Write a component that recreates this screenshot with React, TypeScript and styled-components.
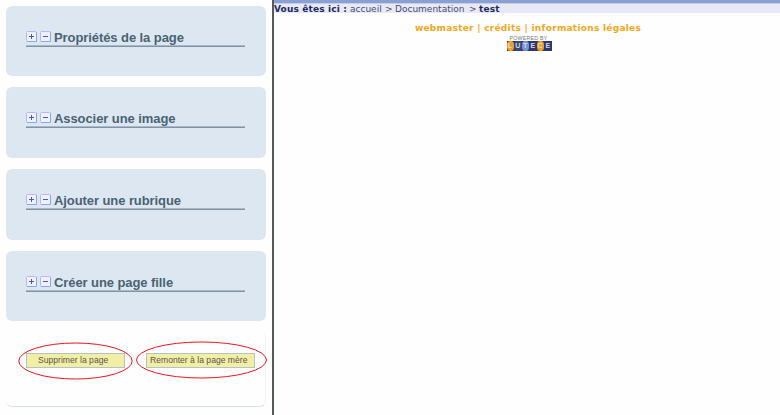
import React from "react";
import styled, { createGlobalStyle } from "styled-components";

const GlobalStyle = createGlobalStyle`
  * { box-sizing: border-box; }
  body { margin: 0; background: #fefefe; overflow: hidden; }
`;

const Page = styled.div`
  display: flex;
  width: 780px;
  height: 415px;
  overflow: hidden;
  background: #fefefe;
`;

const Sidebar = styled.aside`
  display: flex;
  flex-direction: column;
  gap: 11px;
  width: 272px;
  padding: 6px 6px 0;
  font-family: "Liberation Sans", Arial, sans-serif;
`;

const Card = styled.section<{ $height: number }>`
  flex: none;
  width: 260px;
  height: ${(p) => p.$height}px;
  padding: 22px 20px 0;
  border-radius: 6px;
  background: #dde7f1;
`;

const CardHeading = styled.div`
  display: flex;
  align-items: flex-start;
  width: 219px;
  height: 19px;
  padding-top: 3px;
  border-bottom: 1px solid #7e93a6;
  box-shadow: 0 -1px 0 #a9b9c7 inset;
`;

const ToggleIcon = styled.svg`
  flex: none;
  width: 11px;
  height: 11px;
  margin-right: 3px;
`;

const Title = styled.h2`
  margin: 0;
  font-size: 13px;
  line-height: 14px;
  font-weight: bold;
  letter-spacing: -0.08px;
  white-space: nowrap;
  color: #4a6274;
`;

const ActionCard = styled.section`
  display: flex;
  flex: none;
  justify-content: space-between;
  align-items: flex-start;
  width: 260px;
  height: 75px;
  padding: 21px 10px 0 20px;
  border-radius: 6px;
  border-bottom: 1px solid #dbe3e8;
  border-right: 1px solid #f0f3f6;
`;

const ActionWrap = styled.div<{ $width: number }>`
  position: relative;
  width: ${(p) => p.$width}px;
  height: 15px;
`;

const ActionButton = styled.button<{ $indent: number }>`
  display: block;
  width: 100%;
  height: 15px;
  padding: 0 0 0 ${(p) => p.$indent}px;
  border: 1px solid #b3c5c0;
  background: #f3eea6;
  color: #55584a;
  font: 8.6px/13px "Liberation Sans", Arial, sans-serif;
  text-align: left;
  white-space: nowrap;
`;

const Highlight = styled.svg<{ $left: number; $top: number }>`
  position: absolute;
  left: ${(p) => p.$left}px;
  top: ${(p) => p.$top}px;
  pointer-events: none;
`;

const Divider = styled.div`
  width: 2px;
  background: #555b5b;
`;

const Main = styled.main`
  flex: 1;
  min-width: 0;
  font-family: "DejaVu Sans", Verdana, sans-serif;
`;

const TopBar = styled.div`
  height: 4px;
  background: #8ba0d2;
  border-bottom: 1px solid #c3cee7;
`;

const Breadcrumb = styled.nav`
  display: flex;
  height: 9px;
  background: #e7e9f5;
  font-size: 9px;
  line-height: 10px;
  white-space: pre;
`;

const Crumb = styled.span<{ $width: number; $bold?: boolean }>`
  width: ${(p) => p.$width}px;
  font-weight: ${(p) => (p.$bold ? "bold" : "normal")};
  color: ${(p) => (p.$bold ? "#23285f" : "#474c7a")};
  letter-spacing: ${(p) => (p.$bold ? 0.15 : 0)}px;
`;

const Footer = styled.footer`
  display: flex;
  flex-direction: column;
  align-items: center;
  padding: 9px 0 0 2px;
`;

const FooterLinks = styled.div`
  height: 13px;
  color: #f5a71c;
  font-size: 9px;
  line-height: 13px;
  font-weight: bold;
  letter-spacing: 0.27px;
  white-space: nowrap;
`;

const Powered = styled.div`
  height: 6px;
  margin-left: 1px;
  color: #777;
  font: 5.2px/6px "Liberation Sans", Arial, sans-serif;
  letter-spacing: 0.3px;
`;

const Logo = styled.div`
  display: flex;
  width: 45px;
  height: 10px;
  margin-left: 2px;
  background: #2c386f;
`;

const LogoLetter = styled.span<{ $fill: string }>`
  flex: 1 0 0;
  min-width: 0;
  height: 10px;
  border-radius: 40%;
  background: ${(p) => p.$fill};
  color: #d6dae6;
  font: bold 7px/10px "Liberation Sans", Arial, sans-serif;
  text-align: center;
`;

function Toggle({ plus }: { plus?: boolean }) {
  return (
    <ToggleIcon viewBox="0 0 11 11">
      <rect x="0.5" y="0.5" width="10" height="10" rx="1" fill="#eef0ff" stroke="#b9b8f6" />
      <path d="M1 10.5H10.5V1" fill="none" stroke="#83a9f5" />
      <path d={plus ? "M3 5.5H8M5.5 3V8" : "M3 5.5H8"} stroke="#5457a2" fill="none" />
    </ToggleIcon>
  );
}

const sections = [
  { title: "Propriétés de la page", height: 70 },
  { title: "Associer une image", height: 71 },
  { title: "Ajouter une rubrique", height: 71 },
  { title: "Créer une page fille", height: 70 },
];

const letters = [
  { letter: "L", fill: "#f0a01c" },
  { letter: "U", fill: "#3c4878" },
  { letter: "T", fill: "#7895d2" },
  { letter: "E", fill: "#2c386f" },
  { letter: "C", fill: "#f0a01c" },
  { letter: "E", fill: "#2c386f" },
];

export default function App() {
  return (
    <>
      <GlobalStyle />
      <Page>
        <Sidebar>
          {sections.map((s) => (
            <Card key={s.title} $height={s.height}>
              <CardHeading>
                <Toggle plus />
                <Toggle />
                <Title>{s.title}</Title>
              </CardHeading>
            </Card>
          ))}
          <ActionCard>
            <ActionWrap $width={99}>
              <ActionButton $indent={11}>Supprimer la page</ActionButton>
              <Highlight $left={-8} $top={-11} width="115" height="38" viewBox="0 0 115 38">
                <ellipse cx="57.5" cy="19" rx="56.7" ry="18" fill="none" stroke="#f01420" />
              </Highlight>
            </ActionWrap>
            <ActionWrap $width={109}>
              <ActionButton $indent={3}>Remonter à la page mère</ActionButton>
              <Highlight $left={-10} $top={-12} width="131" height="38" viewBox="0 0 131 38">
                <ellipse cx="65.5" cy="19" rx="65" ry="18" fill="none" stroke="#f01420" />
              </Highlight>
            </ActionWrap>
          </ActionCard>
        </Sidebar>
        <Divider />
        <Main>
          <TopBar />
          <Breadcrumb>
            <Crumb $width={76} $bold>Vous êtes ici :</Crumb>
            <Crumb $width={35}>accueil</Crumb>
            <Crumb $width={10}>&gt;</Crumb>
            <Crumb $width={74}>Documentation</Crumb>
            <Crumb $width={10}>&gt;</Crumb>
            <Crumb $width={30} $bold>test</Crumb>
          </Breadcrumb>
          <Footer>
            <FooterLinks>webmaster | crédits | informations légales</FooterLinks>
            <Powered>POWERED BY</Powered>
            <Logo>
              {letters.map((l, i) => (
                <LogoLetter key={i} $fill={l.fill}>{l.letter}</LogoLetter>
              ))}
            </Logo>
          </Footer>
        </Main>
      </Page>
    </>
  );
}
